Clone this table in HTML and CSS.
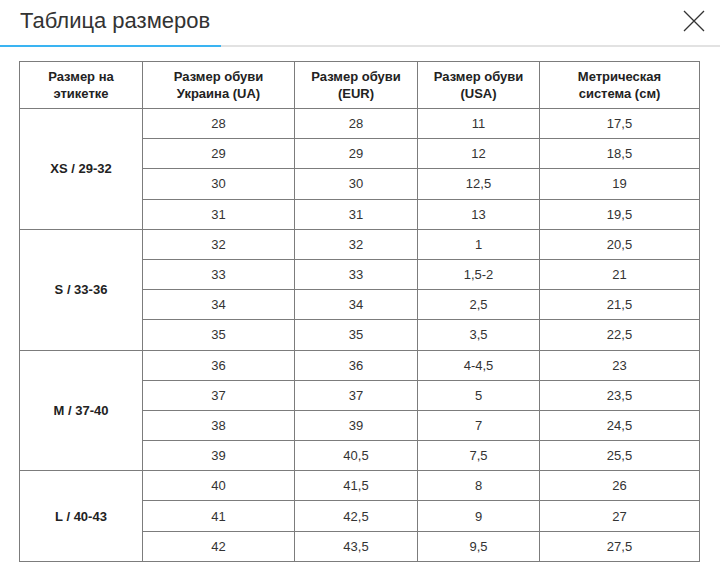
FILE: index.html
```html
<!DOCTYPE html>
<html lang="ru">
<head>
<meta charset="utf-8">
<link rel="stylesheet" href="styles.css">
</head>
<body>
<div class="modal">
  <div class="modal-head">
    <h1 class="title">Таблица размеров</h1>
    <button class="close" aria-label="Закрыть">
      <svg width="22" height="22" viewBox="0 0 22 22"><path d="M1 1L21 21M21 1L1 21" stroke="#333" stroke-width="1.3" fill="none"/></svg>
    </button>
  </div>
  <div class="divider"><span class="divider-active"></span></div>
  <div class="table-wrap">
    <table class="sizes">
      <colgroup>
        <col class="c1"><col class="c2"><col class="c3"><col class="c4"><col class="c5">
      </colgroup>
      <thead>
        <tr>
          <th>Размер на<br>этикетке</th>
          <th>Размер обуви<br>Украина (UA)</th>
          <th>Размер обуви<br>(EUR)</th>
          <th>Размер обуви<br>(USA)</th>
          <th>Метрическая<br>система (см)</th>
        </tr>
      </thead>
      <tbody>
        <tr><td rowspan="4" class="label">XS / 29-32</td><td>28</td><td>28</td><td>11</td><td>17,5</td></tr>
        <tr><td>29</td><td>29</td><td>12</td><td>18,5</td></tr>
        <tr><td>30</td><td>30</td><td>12,5</td><td>19</td></tr>
        <tr><td>31</td><td>31</td><td>13</td><td>19,5</td></tr>
        <tr><td rowspan="4" class="label">S / 33-36</td><td>32</td><td>32</td><td>1</td><td>20,5</td></tr>
        <tr><td>33</td><td>33</td><td>1,5-2</td><td>21</td></tr>
        <tr><td>34</td><td>34</td><td>2,5</td><td>21,5</td></tr>
        <tr><td>35</td><td>35</td><td>3,5</td><td>22,5</td></tr>
        <tr><td rowspan="4" class="label">M / 37-40</td><td>36</td><td>36</td><td>4-4,5</td><td>23</td></tr>
        <tr><td>37</td><td>37</td><td>5</td><td>23,5</td></tr>
        <tr><td>38</td><td>39</td><td>7</td><td>24,5</td></tr>
        <tr><td>39</td><td>40,5</td><td>7,5</td><td>25,5</td></tr>
        <tr><td rowspan="3" class="label">L / 40-43</td><td>40</td><td>41,5</td><td>8</td><td>26</td></tr>
        <tr><td>41</td><td>42,5</td><td>9</td><td>27</td></tr>
        <tr><td>42</td><td>43,5</td><td>9,5</td><td>27,5</td></tr>
      </tbody>
    </table>
  </div>
</div>
</body>
</html>
```
FILE: styles.css
```css
html, body {
  margin: 0;
  padding: 0;
  background: #fff;
}
body {
  font-family: "Liberation Sans", Arial, sans-serif;
  color: #333;
}
.modal {
  width: 720px;
}
.modal-head {
  display: flex;
  justify-content: space-between;
  align-items: flex-start;
  height: 45px;
}
.title {
  margin: 0;
  padding: 8px 0 0 20px;
  font-size: 22px;
  font-weight: normal;
  line-height: 26px;
  color: #333;
}
.close {
  margin: 10px 15px 0 0;
  padding: 0;
  border: 0;
  background: none;
  width: 22px;
  height: 22px;
  cursor: pointer;
}
.close svg {
  display: block;
}
.divider {
  height: 2px;
  background: linear-gradient(#fff 0, #fff 0.5px, #e2e2e2 0.5px);
  display: flex;
}
.divider-active {
  width: 221px;
  height: 2px;
  background: #3ab4f2;
}
.table-wrap {
  padding: 14px 0 0 19px;
}
.sizes {
  border-collapse: collapse;
  table-layout: fixed;
  width: 681px;
  font-size: 13px;
  color: #333;
}
.c1 { width: 123px; }
.c2 { width: 152px; }
.c3 { width: 123px; }
.c4 { width: 122px; }
.c5 { width: 160px; }
.sizes th,
.sizes td {
  border: 1px solid #7c7c7c;
  text-align: center;
  vertical-align: middle;
  padding: 0;
}
.sizes th {
  height: 46px;
  font-weight: bold;
  line-height: 17px;
  color: #222;
}
.sizes td {
  height: 29.2px;
  line-height: 15px;
}
.sizes td.label {
  font-weight: bold;
  color: #222;
}
```
